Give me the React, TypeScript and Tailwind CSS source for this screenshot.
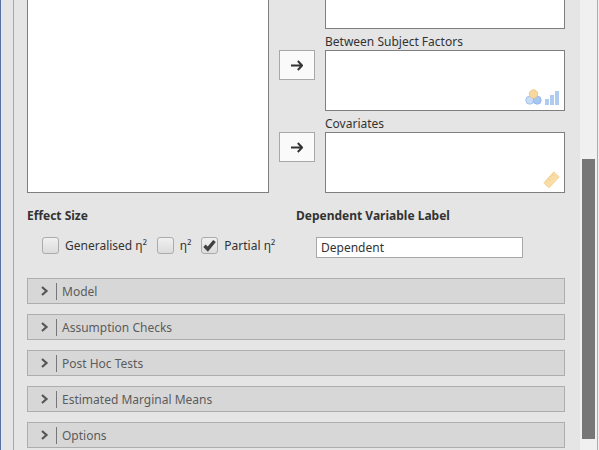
import { useState } from "react";

const sections = [
  "Model",
  "Assumption Checks",
  "Post Hoc Tests",
  "Estimated Marginal Means",
  "Options",
];

function NominalIcon() {
  return (
    <svg width="17" height="17" viewBox="0 0 17 17" aria-hidden="true">
      <circle cx="4.8" cy="11.2" r="4" fill="#c9dcf5" stroke="#a3c2ec" />
      <circle cx="12.2" cy="11.2" r="4" fill="#a9c6f3" stroke="#94b8ef" />
      <circle cx="8.5" cy="5" r="4.2" fill="#f7d9a0" stroke="#e9c88d" />
    </svg>
  );
}

function OrdinalIcon() {
  return (
    <svg width="14" height="17" viewBox="0 0 14 17" fill="#b0cbf0" aria-hidden="true">
      <rect x="0" y="10" width="4" height="6" />
      <rect x="5" y="6" width="4" height="10" />
      <rect x="10" y="2" width="4" height="14" />
    </svg>
  );
}

function ContinuousIcon() {
  return (
    <svg width="17" height="18" viewBox="0 0 17 18" aria-hidden="true">
      <path d="M10.8 .8 16.2 6 6 16.8.8 12Z" fill="#f9dca6" stroke="#f3d39a" />
      <path d="m9 3 2 2M7 5.2l1.2 1.2M5 7.4l2 2M3 9.6l1.2 1.2" stroke="#edc888" />
    </svg>
  );
}

function ArrowButton({ label }: { label: string }) {
  return (
    <button
      type="button"
      aria-label={label}
      className="flex h-[30px] w-full items-center justify-center border border-[#a8a8a8] bg-[#fafafa] text-[#333]"
    >
      <svg width="12" height="12" viewBox="0 0 12 12" fill="none" stroke="currentColor" strokeWidth="2" aria-hidden="true">
        <path d="M0 6.5h11M6.8 2l4.4 4.5L6.8 11" />
      </svg>
    </button>
  );
}

function Check({ label, initial = false }: { label: string; initial?: boolean }) {
  const [checked, setChecked] = useState(initial);
  return (
    <label className="flex items-center gap-1.5">
      <span className="grid">
        <input
          type="checkbox"
          checked={checked}
          onChange={(e) => setChecked(e.target.checked)}
          className="col-start-1 row-start-1 size-[17px] appearance-none rounded-[3px] border border-[#ababab] bg-linear-to-b from-[#f0f0f0] to-[#dcdcdc]"
        />
        {checked && (
          <svg viewBox="0 0 17 17" className="pointer-events-none col-start-1 row-start-1 size-[17px]" fill="none" stroke="#404040" strokeWidth="3.4" aria-hidden="true">
            <path d="m3.5 8.8 3.3 3.4L13.5 4" />
          </svg>
        )}
      </span>
      <span className="pt-px">{label}</span>
    </label>
  );
}

export default function App() {
  const [dependent, setDependent] = useState("Dependent");
  return (
    <div className="flex h-screen overflow-hidden border-l border-[#5b7199] bg-[#e5e5e5] font-['Noto_Sans','Open_Sans',sans-serif] text-[12px] leading-4 text-[#333]">
      <div className="w-3 shrink-0 border-l-3 border-[#dde6f5]" />
      <main className="min-w-0 flex-1 border-l border-[#a9a9a9] pr-[15px] pl-[13px]">
        <div className="grid grid-cols-[242fr_36px_240fr] gap-x-2.5">
          <div className="border border-t-0 border-[#7f7f7f] bg-white" />
          <div className="flex flex-col gap-[52px] pt-[50px]">
            <ArrowButton label="Assign to between subject factors" />
            <ArrowButton label="Assign to covariates" />
          </div>
          <div>
            <div className="h-[29px] border border-t-0 border-[#7f7f7f] bg-white" />
            <div className="flex h-[21px] items-end">Between Subject Factors</div>
            <div className="flex h-[61px] items-end justify-end gap-[3px] border border-[#7f7f7f] bg-white px-[5px] py-1">
              <NominalIcon />
              <OrdinalIcon />
            </div>
            <div className="flex h-[21px] items-end">Covariates</div>
            <div className="flex h-[61px] items-end justify-end border border-[#7f7f7f] bg-white px-1 py-[3px]">
              <ContinuousIcon />
            </div>
          </div>
        </div>

        <div className="mt-[15px] grid grid-cols-2">
          <section>
            <h2 className="font-bold">Effect Size</h2>
            <div className="mt-[13px] flex items-center gap-2.5 pl-[15px] whitespace-nowrap">
              <Check label="Generalised η²" />
              <Check label="η²" />
              <Check label="Partial η²" initial />
            </div>
          </section>
          <section>
            <h2 className="font-bold">
              <label htmlFor="dependent">Dependent Variable Label</label>
            </h2>
            <input
              id="dependent"
              type="text"
              value={dependent}
              onChange={(e) => setDependent(e.target.value)}
              className="mt-[13px] ml-5 block h-[21px] w-[207px] border border-[#a8a8a8] bg-white px-1"
            />
          </section>
        </div>

        <div className="mt-5 flex flex-col gap-2.5">
          {sections.map((name) => (
            <button
              key={name}
              type="button"
              aria-expanded="false"
              className="flex h-[26px] w-full items-center border border-[#adadad] bg-[#d7d7d7] pl-[13px] text-left text-[#5c5c5c]"
            >
              <svg width="8" height="10" viewBox="0 0 8 10" fill="none" stroke="#555" strokeWidth="2.2" aria-hidden="true">
                <path d="m1 1 4.5 4L1 9" />
              </svg>
              <span className="ml-[7px] h-[17px] border-l border-[#777] pl-[5px] leading-[18px]">{name}</span>
            </button>
          ))}
        </div>
      </main>
      <div className="flex w-[17px] shrink-0 flex-col bg-[#f0f0f0] px-0.5" role="presentation">
        <div className="grow-159" />
        <div className="grow-280 bg-[#777]" />
        <div className="grow-11" />
      </div>
      <div className="w-0.5 shrink-0 border-l border-[#adadad] bg-[#f0f0f0]" />
    </div>
  );
}
